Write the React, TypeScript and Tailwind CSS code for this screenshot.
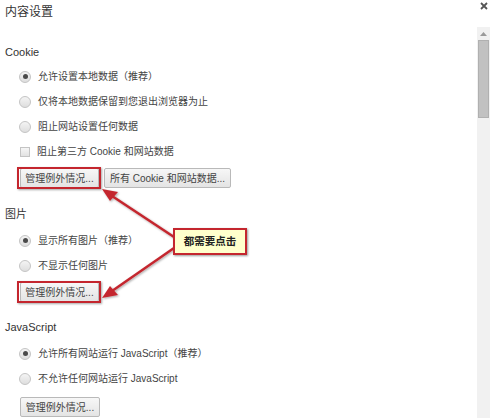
const font = '"Liberation Sans", "Noto Sans CJK SC", sans-serif';

type Choice = { label: string; checked?: boolean; kind?: 'radio' | 'check' };

function Radio({ checked }: { checked?: boolean }) {
  return (
    <span className="w-[12px] h-[12px] rounded-full border border-[#c4c4c4] bg-gradient-to-b from-[#f4f4f4] to-[#dedede] flex items-center justify-center shrink-0">
      {checked && <span className="w-[5px] h-[5px] rounded-full bg-[#4a4a4a]" />}
    </span>
  );
}

function Check() {
  return <span className="w-[10px] h-[10px] border border-[#c4c4c4] bg-gradient-to-b from-[#f6f6f6] to-[#e2e2e2] shrink-0 ml-[1px]" />;
}

function Row({ c }: { c: Choice }) {
  return (
    <div className="h-[25px] flex items-center pl-[19px] gap-[7px]">
      {c.kind === 'check' ? <Check /> : <Radio checked={c.checked} />}
      <span className="text-[10px] text-[#444] leading-none">{c.label}</span>
    </div>
  );
}

function Btn({ label, marked, w }: { label: string; marked?: boolean; w: string }) {
  return (
    <div className={`relative h-[20px] ${w}`}>
      <div className="h-full w-full border border-[#b9b9b9] rounded-[2px] bg-gradient-to-b from-[#f7f7f7] to-[#e4e4e4] flex items-center justify-center text-[10px] text-[#444]">
        {label}
      </div>
      {marked && (
        <div className="absolute -left-[3px] -right-[2px] -top-[1px] -bottom-[1px] border-2 border-[#c4262e] shadow-[1px_1px_2px_rgba(0,0,0,0.35)]" />
      )}
    </div>
  );
}

function Heading({ children, mt }: { children: string; mt: string }) {
  return <div className={`h-[20px] flex items-center pl-[5px] text-[11px] text-[#333] ${mt}`}>{children}</div>;
}

export default function App() {
  return (
    <div className="w-[490px] h-[418px] bg-white relative overflow-hidden flex" style={{ fontFamily: font }}>
      <div className="flex-1 flex flex-col">
        <div className="h-[24px] flex items-center pl-[5px] text-[12px] text-[#333]">内容设置</div>

        <Heading mt="mt-[18px]">Cookie</Heading>
        <div className="mt-[2px]">
          <Row c={{ label: '允许设置本地数据（推荐）', checked: true }} />
          <Row c={{ label: '仅将本地数据保留到您退出浏览器为止' }} />
          <Row c={{ label: '阻止网站设置任何数据' }} />
          <Row c={{ label: '阻止第三方 Cookie 和网站数据', kind: 'check' }} />
        </div>
        <div className="flex gap-[5px] pl-[20px] mt-[4px]">
          <Btn label="管理例外情况..." marked w="w-[79px]" />
          <Btn label="所有 Cookie 和网站数据..." w="w-[127px]" />
        </div>

        <Heading mt="mt-[16px]">图片</Heading>
        <div className="mt-[4px]">
          <Row c={{ label: '显示所有图片（推荐）', checked: true }} />
          <Row c={{ label: '不显示任何图片' }} />
        </div>
        <div className="flex pl-[20px] mt-[4px]">
          <Btn label="管理例外情况..." marked w="w-[79px]" />
        </div>

        <Heading mt="mt-[15px]">JavaScript</Heading>
        <div className="mt-[4px]">
          <Row c={{ label: '允许所有网站运行 JavaScript（推荐）', checked: true }} />
          <Row c={{ label: '不允许任何网站运行 JavaScript' }} />
        </div>
        <div className="flex pl-[20px] mt-[6px]">
          <Btn label="管理例外情况..." w="w-[80px]" />
        </div>
      </div>

      {/* close + scrollbar */}
      <div className="w-[13px] flex flex-col items-center">
        <div className="h-[27px] w-full flex justify-center pt-[1px]">
          <svg width="8" height="8" viewBox="0 0 8 8" className="mt-[1px]">
            <path d="M1 1L7 7M7 1L1 7" stroke="#555" strokeWidth="1.8" />
          </svg>
        </div>
        <div className="flex-1 w-full bg-[#f1f1f1] flex flex-col items-center">
          <div className="h-[13px] flex items-center justify-center">
            <svg width="7" height="4" viewBox="0 0 7 4"><path d="M0 4L3.5 0L7 4Z" fill="#9a9a9a" /></svg>
          </div>
          <div className="w-[11px] h-[78px] bg-[#c1c1c1] border border-[#b0b0b0]" />
        </div>
      </div>

      {/* annotation arrows */}
      <svg className="absolute left-0 top-0 pointer-events-none" width="490" height="418">
        <defs>
          <filter id="sh" x="-20%" y="-20%" width="140%" height="140%">
            <feDropShadow dx="1" dy="1" stdDeviation="0.8" floodColor="#000" floodOpacity="0.35" />
          </filter>
        </defs>
        <g filter="url(#sh)" fill="#c4262e" stroke="#c4262e">
          <line x1="174" y1="237" x2="112" y2="196" strokeWidth="2.5" />
          <polygon points="102,189 118,192 110,201" stroke="none" />
          <line x1="174" y1="248" x2="112" y2="291" strokeWidth="2.5" />
          <polygon points="102,298 110,286 118,295" stroke="none" />
        </g>
      </svg>

      <div className="absolute left-[173px] top-[228px] w-[74px] h-[27px] bg-[#ffffcc] border-2 border-[#c4262e] shadow-[1px_1px_2px_rgba(0,0,0,0.4)] flex items-center justify-center text-[10.5px] font-bold text-[#222]">
        都需要点击
      </div>
    </div>
  );
}
